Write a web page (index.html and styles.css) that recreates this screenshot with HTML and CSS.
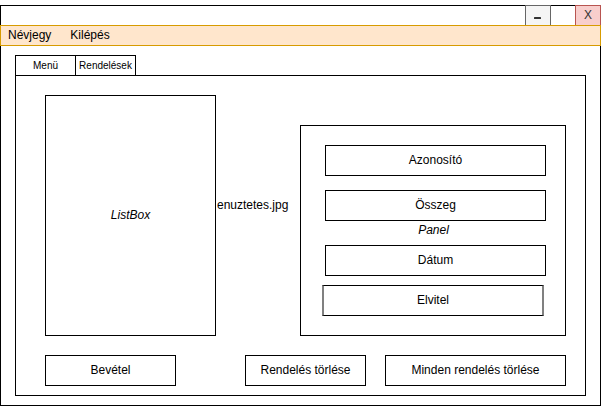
FILE: index.html
```html
<!DOCTYPE html>
<html lang="hu">
<head>
<meta charset="utf-8">
<meta name="viewport" content="width=device-width, initial-scale=1">
<title>Rendelések</title>
<link rel="stylesheet" href="styles.css">
</head>
<body>
<div class="window">
  <header class="titlebar">
    <button class="win-btn win-min" type="button" aria-label="Kis méret"><svg width="7" height="2" viewBox="0 0 7 2" aria-hidden="true"><rect width="7" height="2" rx="0.5" fill="#333"/></svg></button>
    <button class="win-btn win-close" type="button">X</button>
  </header>
  <nav class="menubar">
    <a href="#nevjegy">Névjegy</a>
    <a href="#kilepes">Kilépés</a>
  </nav>
  <main class="content">
    <div class="tabs" role="tablist">
      <button class="tab" type="button" role="tab" aria-selected="false">Menü</button>
      <button class="tab" type="button" role="tab" aria-selected="true">Rendelések</button>
    </div>
    <section class="page" role="tabpanel">
      <div class="columns">
        <div class="listbox" role="listbox"><em>ListBox</em></div>
        <div class="picture">enuztetes.jpg</div>
        <form class="panel">
          <input class="field" type="text" aria-label="Azonosító" value="Azonosító">
          <input class="field" type="text" aria-label="Összeg" value="Összeg">
          <em class="panel-name">Panel</em>
          <input class="field" type="text" aria-label="Dátum" value="Dátum">
          <input class="field field-wide" type="text" aria-label="Elvitel" value="Elvitel">
        </form>
      </div>
      <div class="actions">
        <button class="action income" type="button">Bevétel</button>
        <button class="action remove" type="button">Rendelés törlése</button>
        <button class="action remove-all" type="button">Minden rendelés törlése</button>
      </div>
    </section>
  </main>
</div>
</body>
</html>
```
FILE: styles.css
```css
* {
  box-sizing: border-box;
}

body {
  margin: 0;
  padding: 5px 1px 0 0;
  min-height: 100vh;
  display: flex;
  flex-direction: column;
  background: #fff;
  color: #000;
  font: 12px/14px "Liberation Sans", Arial, sans-serif;
}

button,
input {
  margin: 0;
  padding: 0 0 2px;
  border: 1px solid #000;
  border-radius: 0;
  background: #fff;
  color: inherit;
  font: inherit;
  text-align: center;
}

.window {
  flex: 1;
  display: flex;
  flex-direction: column;
  border: 1px solid #000;
}

/* Title bar and menu sit on top of the window frame */
.titlebar {
  display: flex;
  justify-content: flex-end;
  gap: 24px;
  height: 20px;
  margin: -1px -1px 0;
}

.win-btn {
  width: 26px;
  border-bottom: 0;
}

.win-min {
  display: flex;
  align-items: center;
  justify-content: center;
  padding: 5px 1px 0 0;
  background: #f5f5f5;
  border-color: #666;
}

.win-close {
  background: #f8cecc;
  border-color: #b85450;
  color: #333;
}

.menubar {
  display: flex;
  align-items: center;
  gap: 19px;
  height: 21px;
  margin: 0 -1px;
  padding: 0 7px 2px;
  background: #ffe6cc;
  border: 1px solid #d79b00;
}

.menubar a {
  color: inherit;
  text-decoration: none;
}

.content {
  flex: 1;
  display: flex;
  flex-direction: column;
  padding: 9px 14px;
}

.tabs {
  display: flex;
}

.tab {
  width: 61px;
  height: 20px;
  padding: 0;
  border-bottom: 0;
  font-size: 10px;
  white-space: nowrap;
}

.tab + .tab {
  margin-left: -1px;
}

.page {
  flex: 1;
  display: flex;
  flex-direction: column;
  gap: 19px;
  padding: 19px 19px 9px 29px;
  border: 1px solid #000;
}

.columns {
  flex: 1;
  display: grid;
  grid-template-columns: 171fr 84fr 266fr;
}

.listbox {
  display: flex;
  align-items: center;
  justify-content: center;
  padding-bottom: 2px;
  border: 1px solid #000;
}

.picture {
  align-self: center;
  padding: 0 0 22px 1px;
}

.panel {
  display: flex;
  flex-direction: column;
  margin-top: 30px;
  padding: 19px 19px 19px 24px;
  border: 1px solid #000;
}

.field {
  height: 31px;
}

.field + .field {
  margin-top: 14px;
}

.panel-name {
  height: 24px;
  line-height: 18px;
  padding-right: 4px;
  text-align: center;
}

.field + .field-wide {
  margin: 9px 2px 0 -3px;
  border-width: 1px 2px;
  border-color: #000 #808080;
}

.actions {
  display: grid;
  grid-template-columns: 131fr 69fr 121fr 19fr 181fr;
}

.action {
  height: 31px;
  white-space: nowrap;
}

.remove {
  grid-column: 3;
}

.remove-all {
  grid-column: 5;
}
```
